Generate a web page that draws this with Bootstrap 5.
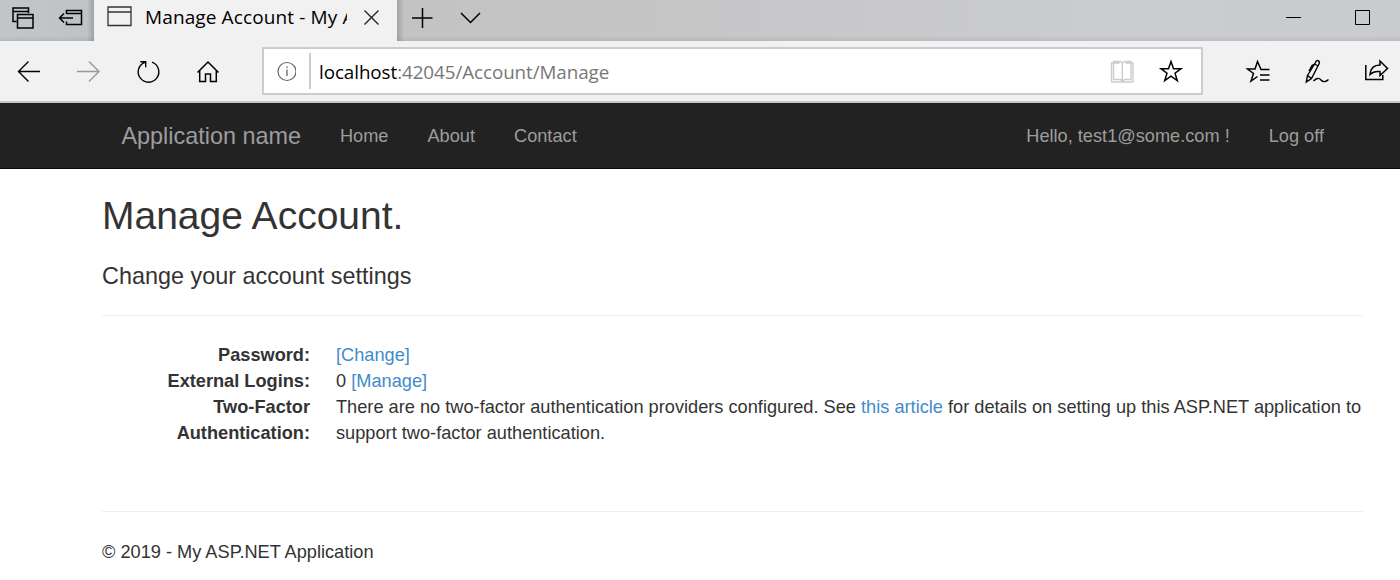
<!DOCTYPE html>
<html lang="en">
<head>
<meta charset="utf-8">
<meta name="viewport" content="width=device-width, initial-scale=1">
<title>Manage Account - My ASP.NET Application</title>
<link href="https://cdn.jsdelivr.net/npm/bootstrap@5.3.0/dist/css/bootstrap.min.css" rel="stylesheet">
<style>
body{font:18.2px/26px "Liberation Sans",Arial,sans-serif;color:#333;background:#fff;width:1400px;height:580px;overflow:hidden}
svg{display:block;fill:none;stroke:#000;stroke-width:1.4;flex:none}
.chrome-ui{font-family:"Open Sans","Noto Sans",sans-serif;color:#000}
.tabstrip{height:41px;background:linear-gradient(to bottom,transparent 36px,rgba(0,0,0,.07)),linear-gradient(90deg,#c3c6c8,#bfc3c6 90px,#c3c3c4 400px,#c5c5c6 650px,#cbccd0 1100px,#c9cbcf)}
.tab-tools{width:94px;background:linear-gradient(to right,transparent 87px,rgba(0,0,0,.17))}
.page-tab{width:303px;background:#f1f1f1}
.tab-title{width:202px;margin-left:12px;font-size:19px;line-height:35px;letter-spacing:.12px}
.after-tab{background:linear-gradient(to left,transparent calc(100% - 7px),rgba(0,0,0,.17))}
.toolbar{height:62px;background:#f1f1f1;border-bottom:2px solid #c8c8c8}
.tool{width:60px;height:60px}
.tool-first{width:58px}
.tool-end{width:59px}
.address{flex:none;width:941px;height:48px;margin-left:24px;margin-right:26px;border:2px solid #ccc;background:#fff}
.address-text{font-size:18.8px;line-height:44px;letter-spacing:-.06px;margin-left:8px;padding-top:1px}
.divider{width:2px;height:36px;background:#ccc;margin-left:13px}
.site-nav{height:66px;background:#222;border-bottom:1px solid #080808;padding:0 56.5px 0 102px}
.site-nav .nav-link,.site-nav .navbar-brand{color:#9d9d9d;padding:19.5px;line-height:26px;margin:0}
.site-nav .navbar-brand{font-size:23.4px}
.page-body{padding:25px 37px 0 102px}
h2{font-size:39px;line-height:43px;margin:0 0 26px}
h4{font-size:23.4px;line-height:26px;margin:0}
h2,h4{font-weight:400}
hr{opacity:1;border-top:1px solid #eee}
.first-rule{margin:26px 0}
.foot-rule{margin:65px 0 27px}
dt{width:208px}
dd{width:1027px;letter-spacing:.005px}
dl a{color:#428bca;text-decoration:none}
</style>
</head>
<body>
<div class="chrome-ui">
  <div class="tabstrip d-flex">
    <div class="tab-tools d-flex">
      <svg width="94" height="41" viewBox="0 0 94 41"><path d="M16.500 21.500H13V8H28.500V13M13 11.500H28.500M17.500 14.500H33V28H17.500zM17.500 18H33" stroke-width="1.5"/><path d="M66.500 14V10.500H81.500V24.500H66.500V21.500M66.500 13.500H81.500M59.500 18H73M64 13.500L59.500 18L64 22.500" stroke-width="1.5"/></svg>
    </div>
    <div class="page-tab d-flex">
      <svg width="39" height="41" viewBox="0 0 39 41"><path d="M14 7H37V25.500H14zM14 12H37" stroke="#333" stroke-width="1.3"/></svg>
      <div class="tab-title text-nowrap overflow-hidden">Manage Account - My ASP.NET</div>
      <svg width="44" height="41" viewBox="0 0 44 41"><path d="M17.500 10.500L31.500 24.500M31.500 10.500L17.500 24.500" stroke="#222"/></svg>
    </div>
    <div class="after-tab d-flex flex-grow-1">
      <svg width="100" height="41" viewBox="0 0 100 41"><path d="M15 18H35.500M25.500 8V28M64 13L73.500 22.500L83 13" stroke-width="1.5"/></svg>
      <svg class="ms-auto" width="120" height="41" viewBox="0 0 120 41"><path d="M6 17.500H21M75.500 10.500H89.500V24.500H75.500z" stroke-width="1"/></svg>
    </div>
  </div>
  <div class="toolbar d-flex align-items-center">
    <svg class="tool tool-first" viewBox="0 0 58 60"><path d="M40 30.500H18M28.500 20.500L18.500 30.500L28.500 40.500"/></svg>
    <svg class="tool" viewBox="0 0 60 60"><path d="M19 30.500H41M31 20.500L41 30.500L31 40.500" stroke="#999"/></svg>
    <svg class="tool" viewBox="0 0 60 60"><path d="M33.500 21.200A10.300 10.300 0 1 1 26.300 21.300M21.800 20.700H27.200V26.300" transform="translate(.5 0)"/></svg>
    <svg class="tool" viewBox="0 0 60 60"><path d="M19.500 31.500L30 21L40.500 31.500M21.700 29.500V40.500H27.500V33H32.500V40.500H38.300V29.500" stroke-width="1.5"/></svg>
    <div class="address d-flex align-items-center">
      <svg width="32" height="44" viewBox="0 0 32 44"><circle cx="23" cy="22.500" r="9" stroke="#666" stroke-width="1.200"/><path d="M23 20.500V27M23 17.500V19" stroke="#666" stroke-width="1.300"/></svg>
      <div class="divider"></div>
      <div class="address-text text-nowrap">localhost<span style="color:#777">:42045/Account/Manage</span></div>
      <svg class="ms-auto" width="99" height="44" viewBox="0 0 99 44"><path d="M18 13.500H10V32.500H31.500V13.500H24M12 12H19L21 13.500L23 12H29.500V30H23L21 32L19 30H12zM20.800 13.500V32" transform="translate(-.5 .5)" stroke="#ccc" stroke-width="1.400"/><path d="M69 12.500L71.500 19.700H79L73 24.200L75.300 31.600L69 27.200L62.700 31.600L65 24.200L59 19.700H66.500z" stroke-width="1.500"/></svg>
    </div>
    <svg class="tool tool-end" viewBox="0 0 59 60"><path d="M40.500 28.500H32L28.500 20.500L26 28H18.500L24.500 32.500L22 40L28.500 35.500M31 34H40.500M31 39H40.500" stroke-width="1.500"/></svg>
    <svg class="tool tool-end" viewBox="0 0 59 60"><path d="M18.300 41L19.500 34.500L27.500 21.500C28.500 18 32 19.500 31.200 22.500L23.500 37.500zM19.500 34.500L23.500 37.500M26.500 23L30 25M26.500 23L24 24.500L21 30M25.500 40C28.500 37 31 36.500 33 39C35 41.500 38 41 40.500 38.500" stroke-width="1.400"/></svg>
    <svg class="tool tool-end" viewBox="0 0 59 60"><path d="M18.800 24V38.500H35.800V34M23 33.500C23.500 27.500 27 24 33 24V20L40.500 27.500L33 34.500V30.500C28.500 30 25.500 31 23 33.500z" stroke-width="1.500"/></svg>
  </div>
</div>
<nav class="site-nav d-flex align-items-start">
  <a class="navbar-brand" href="#">Application name</a>
  <a class="nav-link" href="#">Home</a><a class="nav-link" href="#">About</a><a class="nav-link" href="#">Contact</a>
  <a class="nav-link ms-auto" href="#">Hello, test1@some.com !</a><a class="nav-link" href="#">Log off</a>
</nav>
<main class="page-body">
  <h2>Manage Account.</h2>
  <h4>Change your account settings</h4>
  <hr class="first-rule">
  <dl class="m-0">
    <div class="d-flex justify-content-between"><dt class="text-end">Password:</dt><dd class="m-0"><a href="#">[Change]</a></dd></div>
    <div class="d-flex justify-content-between"><dt class="text-end">External Logins:</dt><dd class="m-0">0 <a href="#">[Manage]</a></dd></div>
    <div class="d-flex justify-content-between"><dt class="text-end">Two-Factor Authentication:</dt><dd class="m-0">There are no two-factor authentication providers configured. See <a href="#">this article</a> for details on setting up this ASP.NET application to support two-factor authentication.</dd></div>
  </dl>
  <hr class="foot-rule">
  <footer>© 2019 - My ASP.NET Application</footer>
</main>
<script src="https://cdn.jsdelivr.net/npm/bootstrap@5.3.0/dist/js/bootstrap.bundle.min.js"></script>
</body>
</html>
